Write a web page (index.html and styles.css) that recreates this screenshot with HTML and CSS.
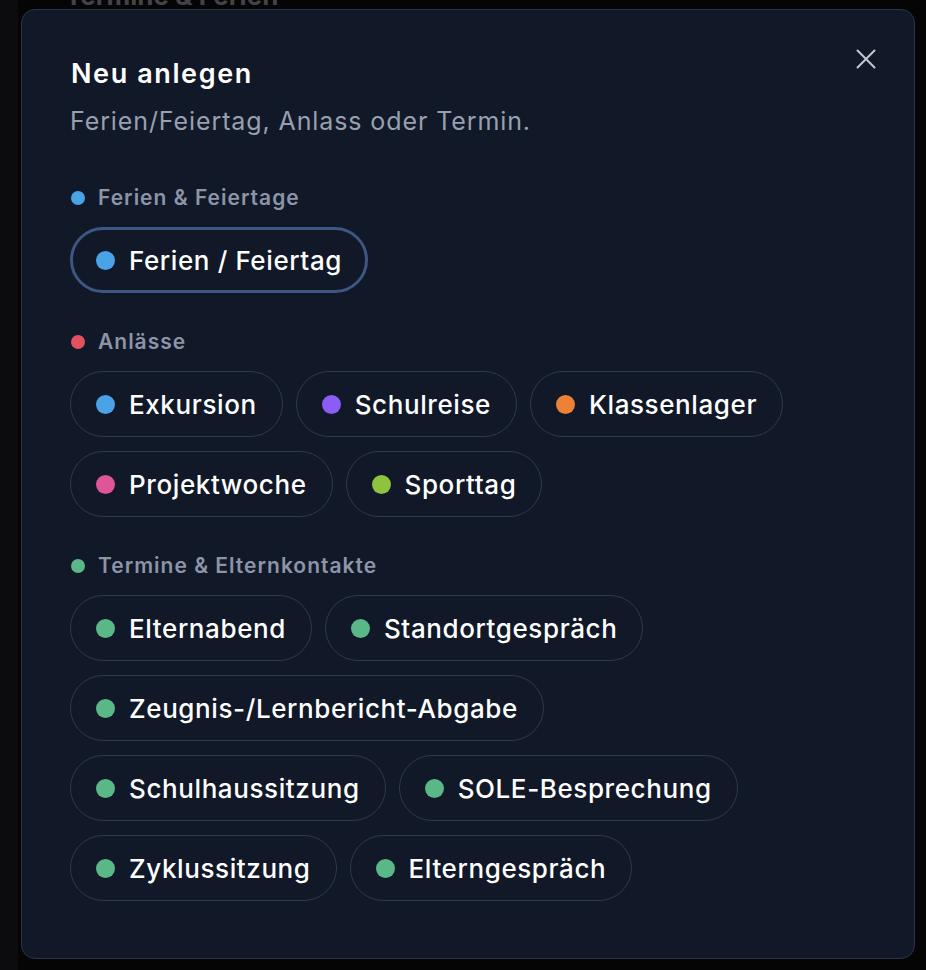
FILE: index.html
```html
<!DOCTYPE html>
<html lang="de">
<head>
<meta charset="utf-8">
<title>Neu anlegen</title>
<link rel="stylesheet" href="styles.css">
</head>
<body>
<div class="backdrop">
  <aside class="side"></aside>
  <main class="page">
    <h2 class="page-title">Termine &amp; Ferien</h2>
  </main>
</div>

<div class="modal" role="dialog" aria-labelledby="dlg-title">
  <button class="close" aria-label="Schliessen">
    <svg width="20" height="20" viewBox="0 0 20 20" fill="none" stroke="currentColor" stroke-width="2" stroke-linecap="round"><path d="M1.5 1.5 L18.5 18.5 M18.5 1.5 L1.5 18.5"/></svg>
  </button>
  <header class="head">
    <h1 id="dlg-title" class="title">Neu anlegen</h1>
    <p class="subtitle">Ferien/Feiertag, Anlass oder Termin.</p>
  </header>

  <section class="group">
    <h3 class="label"><span class="ldot blue"></span>Ferien &amp; Feiertage</h3>
    <div class="chips">
      <button class="chip active"><span class="dot blue"></span>Ferien / Feiertag</button>
    </div>
  </section>

  <section class="group">
    <h3 class="label"><span class="ldot red"></span>Anlässe</h3>
    <div class="chips">
      <button class="chip"><span class="dot blue"></span>Exkursion</button>
      <button class="chip"><span class="dot purple"></span>Schulreise</button>
      <button class="chip"><span class="dot orange"></span>Klassenlager</button>
      <button class="chip"><span class="dot pink"></span>Projektwoche</button>
      <button class="chip"><span class="dot lime"></span>Sporttag</button>
    </div>
  </section>

  <section class="group">
    <h3 class="label"><span class="ldot green"></span>Termine &amp; Elternkontakte</h3>
    <div class="chips">
      <button class="chip"><span class="dot green"></span>Elternabend</button>
      <button class="chip"><span class="dot green"></span>Standortgespräch</button>
      <button class="chip"><span class="dot green"></span>Zeugnis-/Lernbericht-Abgabe</button>
      <button class="chip"><span class="dot green"></span>Schulhaussitzung</button>
      <button class="chip"><span class="dot green"></span>SOLE-Besprechung</button>
      <button class="chip"><span class="dot green"></span>Zyklussitzung</button>
      <button class="chip"><span class="dot green"></span>Elterngespräch</button>
    </div>
  </section>
</div>
</body>
</html>
```
FILE: styles.css
```css
* { box-sizing: border-box; }
html, body { margin: 0; padding: 0; }
body {
  width: 926px;
  height: 970px;
  overflow: hidden;
  background: #050506;
  font-family: "Inter", "Noto Sans", sans-serif;
  color: #f3f4f6;
  position: relative;
}

.backdrop { display: flex; height: 100%; }
.side { width: 18px; background: #0c0c0e; }
.page { flex: 1; padding-left: 47px; }
.page-title {
  margin: -20px 0 0;
  font-size: 26px;
  font-weight: 700;
  color: #434446;
}

.modal {
  position: absolute;
  left: 21px;
  top: 9px;
  width: 894px;
  height: 950px;
  background: #111827;
  border: 1px solid #2c3546;
  border-radius: 14px;
  padding: 47px 48px 0 48px;
}

.close {
  position: absolute;
  top: 39px;
  right: 38px;
  width: 20px;
  height: 20px;
  padding: 0;
  border: 0;
  background: none;
  color: #c3c7cf;
  display: flex;
}

.head { margin-bottom: 49px; }
.title {
  margin: 0 0 0 1px;
  font-size: 27px;
  line-height: 34px;
  font-weight: 600;
  color: #ffffff;
  letter-spacing: 1.6px;
}
.subtitle {
  margin: 14px 0 0;
  font-size: 25px;
  line-height: 32px;
  font-weight: 400;
  color: #97a0b0;
  letter-spacing: 0.9px;
}

.group { margin-bottom: 37px; }
.label {
  display: flex;
  align-items: center;
  gap: 13px;
  margin: 0 0 17px;
  height: 24px;
  line-height: 24px;
  font-size: 21px;
  font-weight: 600;
  color: #8c95a7;
  letter-spacing: 1px;
}
.ldot {
  width: 14px;
  height: 14px;
  border-radius: 50%;
  margin-left: 1px;
}

.chips {
  display: flex;
  flex-wrap: wrap;
  column-gap: 13px;
  row-gap: 14px;
}
.chip {
  display: inline-flex;
  align-items: center;
  gap: 14px;
  height: 66px;
  padding: 0 25px 0 25px;
  border: 1.5px solid #2f3949;
  border-radius: 999px;
  background: transparent;
  font-family: inherit;
  font-size: 26px;
  font-weight: 500;
  letter-spacing: 0.6px;
  color: #ffffff;
  white-space: nowrap;
}
.chip.active {
  border: 3px solid #3e5684;
  padding: 0 23px;
}
.dot {
  width: 19px;
  height: 19px;
  border-radius: 50%;
  flex: none;
}

.blue { background: #4aa3e6; }
.red { background: #e4505e; }
.purple { background: #8b5cf6; }
.orange { background: #ed8236; }
.pink { background: #df5598; }
.lime { background: #8ec33f; }
.green { background: #5ab888; }
```
